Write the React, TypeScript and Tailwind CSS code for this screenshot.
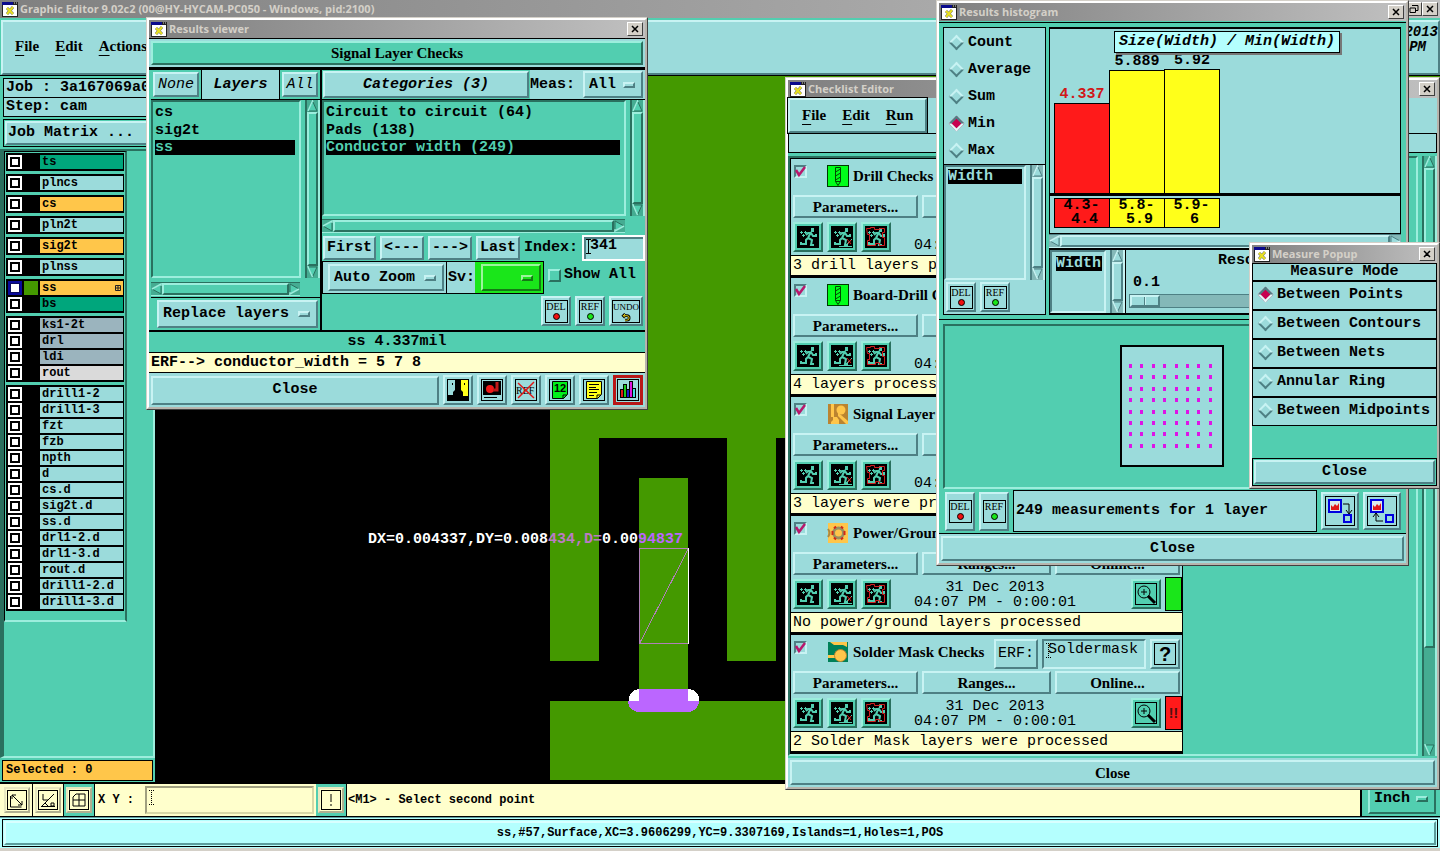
import type { ReactNode } from "react";

const serif = "font-['Liberation_Serif',serif] font-bold";

const raised = "border-2 border-t-[#c8f3f3] border-l-[#c8f3f3] border-b-[#4e8084] border-r-[#4e8084] bg-[#9bdbdb]";
const raisedTeal = "border-2 border-t-[#9ceedd] border-l-[#9ceedd] border-b-[#2a705f] border-r-[#2a705f] bg-[#52ceb0]";
const sunken = "border-2 border-t-[#4e8084] border-l-[#4e8084] border-b-[#c8f3f3] border-r-[#c8f3f3] bg-[#9bdbdb]";
const sunkenTeal = "border-2 border-t-[#2a705f] border-l-[#2a705f] border-b-[#9ceedd] border-r-[#9ceedd] bg-[#52ceb0]";

const layerGroups = [
  [{ name: "ts", color: "bg-[#00a67c]" }],
  [{ name: "plncs", color: "bg-[#9bdbdb]" }],
  [{ name: "cs", color: "bg-[#ffc64a]" }],
  [{ name: "pln2t", color: "bg-[#9bdbdb]" }],
  [{ name: "sig2t", color: "bg-[#ffc64a]" }],
  [{ name: "plnss", color: "bg-[#9bdbdb]" }],
  [
    { name: "ss", color: "bg-[#ffc64a]", active: true },
    { name: "bs", color: "bg-[#00a67c]" },
  ],
  [
    { name: "ks1-2t", color: "bg-[#9bb4be]" },
    { name: "drl", color: "bg-[#9bb4be]" },
    { name: "ldi", color: "bg-[#9bb4be]" },
    { name: "rout", color: "bg-[#dadada]" },
  ],
  [
    "drill1-2", "drill1-3", "fzt", "fzb", "npth", "d", "cs.d", "sig2t.d",
    "ss.d", "drl1-2.d", "drl1-3.d", "rout.d", "drill1-2.d", "drill1-3.d",
  ].map((name) => ({ name, color: "bg-[#9bdbdb]" })),
] as { name: string; color: string; active?: boolean }[][];

const checks = [
  { title: "Drill Checks", icon: "drill", message: "3 drill layers processed", status: "bg-[#1ae61a]" },
  { title: "Board-Drill Checks", icon: "drill", message: "4 layers processed", status: "bg-[#1ae61a]" },
  { title: "Signal Layer Checks", icon: "signal", message: "3 layers were processed", status: "bg-[#ff1a1a]", alert: true },
  { title: "Power/Ground Checks", icon: "power", message: "No power/ground layers processed", status: "bg-[#1ae61a]" },
  { title: "Solder Mask Checks", icon: "mask", message: "2 Solder Mask layers were processed", status: "bg-[#ff1a1a]", alert: true },
];

const measureModes = ["Between Points", "Between Contours", "Between Nets", "Annular Ring", "Between Midpoints"];

function AppIcon() {
  return (
    <svg width="16" height="15" viewBox="0 0 16 15" className="shrink-0">
      <rect width="16" height="15" fill="#222" />
      <rect x="1" y="3" width="14" height="11" fill="#fff" />
      <rect width="11" height="3" fill="#0a0a8c" />
      <path d="M12 1h1M14 1h1" stroke="#ccc" />
      <path d="M5 6l6 6M11 5l-6 7" stroke="#777" strokeWidth="3" />
      <path d="M5 6l6 6M11 5l-6 7" stroke="#e8e020" strokeWidth="2" />
    </svg>
  );
}

function WinButton({ label, children }: { label: string; children: ReactNode }) {
  return (
    <button aria-label={label} className="flex h-[14px] w-4 shrink-0 items-center justify-center border border-t-white border-l-white border-b-[#404040] border-r-[#404040] bg-[#d4d0c8]">
      <svg width="10" height="10" viewBox="0 0 10 10" fill="none" stroke="#000">{children}</svg>
    </button>
  );
}

function TitleBar({ title, children }: { title: string; children?: ReactNode }) {
  return (
    <div className="flex h-[18px] shrink-0 items-center bg-gradient-to-r from-[#808080] to-[#c0c0c0] px-[2px]">
      <AppIcon />
      <h2 className="ml-[2px] flex-1 overflow-hidden font-['Open_Sans',sans-serif] text-[11px] leading-4 font-bold whitespace-nowrap text-[#d4d0c8]">{title}</h2>
      {children ?? (
        <WinButton label={"Close " + title}>
          <path d="M2 2l6 6M8 2l-6 6" strokeWidth="1.500" />
        </WinButton>
      )}
    </div>
  );
}

function Frame({ title, className, children }: { title: string; className: string; children: ReactNode }) {
  return (
    <section aria-label={title} className={"absolute flex flex-col border border-t-[#d4d0c8] border-l-[#d4d0c8] border-b-[#404040] border-r-[#404040] " + className}>
      <div className="flex min-h-0 flex-1 flex-col border-2 border-t-white border-l-white border-b-[#b8b4ac] border-r-[#b8b4ac] bg-[#52ceb0]">
        <TitleBar title={title} />
        {children}
      </div>
    </section>
  );
}

function Arrow({ d, teal }: { d: string; teal?: boolean }) {
  return (
    <svg width="11" height="12" viewBox="0 0 11 12" className="shrink-0">
      <path d={d} fill={teal ? "#52ceb0" : "#9bdbdb"} stroke={teal ? "#2a705f" : "#4e8084"} strokeWidth="1" />
      <path d={d} fill="none" stroke={teal ? "#9ceedd" : "#c8f3f3"} strokeWidth="1.500" strokeDasharray="12 30" />
    </svg>
  );
}

function VScroll({ teal, thumb = "flex-1" }: { teal?: boolean; thumb?: string }) {
  return (
    <div className={(teal ? "bg-[#45ac92] border-l-[#2a705f] border-r-[#9ceedd] " : "bg-[#84b8b8] border-l-[#4e8084] border-r-[#c8f3f3] ") + "flex w-[15px] shrink-0 flex-col items-center border-x-2"}>
      <Arrow teal={teal} d="M1 11L5.5 1L10 11Z" />
      <div className={(teal ? raisedTeal : raised) + " w-full " + thumb} />
      {thumb !== "flex-1" && <div className="flex-1" />}
      <Arrow teal={teal} d="M5.5 11L1 1L10 1Z" />
    </div>
  );
}

function HScroll({ teal }: { teal?: boolean }) {
  return (
    <div className={(teal ? "bg-[#45ac92] border-t-[#2a705f] border-b-[#9ceedd] " : "bg-[#84b8b8] border-t-[#4e8084] border-b-[#c8f3f3] ") + "flex h-[14px] shrink-0 items-center border-y"}>
      <Arrow teal={teal} d="M1 6L10 1L10 11Z" />
      <div className={(teal ? raisedTeal : raised) + " h-full flex-1"} />
      <Arrow teal={teal} d="M10 6L1 11L1 1Z" />
    </div>
  );
}

function OptionMenu({ label, value, className, tone }: { label: string; value: string; className: string; tone?: string }) {
  return (
    <span className={"relative flex " + className}>
      <select aria-label={label} className={"w-full appearance-none pl-1 leading-5 " + (tone ?? raised)}>
        <option>{value}</option>
      </select>
      <span className={"pointer-events-none absolute top-1/2 right-2 h-[6px] w-3 -translate-y-1/2 " + (tone ?? raised)} />
    </span>
  );
}

/* text box with the Motif I-beam insertion cursor at its start */
function TextBox({ id, label, value, className, wrap, dotted }: { id: string; label?: string; value?: string; className: string; wrap: string; dotted?: boolean }) {
  return (
    <span className={"relative flex " + wrap}>
      <input id={id} aria-label={label} defaultValue={value} className={"w-full min-w-0 " + className} />
      <svg width="5" height="15" viewBox="0 0 5 15" className="pointer-events-none absolute top-1 left-1">
        <path d="M0 .5h5M0 14.500h5M2.500 0v15" stroke="#000" strokeDasharray={dotted ? "1 1" : undefined} />
      </svg>
    </span>
  );
}

function Radio({ name, label, checked }: { name: string; label: string; checked?: boolean }) {
  return (
    <label className="flex h-[27px] items-center gap-[6px] pl-[7px] whitespace-nowrap">
      <input
        type="radio"
        name={name}
        defaultChecked={checked}
        className="h-[11px] w-[11px] shrink-0 rotate-45 appearance-none border-2 border-t-[#c8f3f3] border-l-[#c8f3f3] border-b-[#4e8084] border-r-[#4e8084] checked:border-t-[#4e8084] checked:border-l-[#4e8084] checked:border-b-[#e4f8f8] checked:border-r-[#e4f8f8] checked:bg-[#c80050]"
      />
      {label}
    </label>
  );
}

/* 22px pictogram inside a bevelled button */
function IconButton({ label, className, children }: { label: string; className?: string; children: ReactNode }) {
  return (
    <button aria-label={label} className={"flex h-[30px] w-[30px] shrink-0 items-center justify-center " + (className ?? raised)}>
      <svg width="22" height="22" viewBox="0 0 22 22" fill="none">{children}</svg>
    </button>
  );
}

function WordButton({ word, dot, size = "h-[30px] w-[30px]", box = "w-[23px]" }: { word: string; dot?: string; size?: string; box?: string }) {
  return (
    <button className={"flex shrink-0 items-center justify-center " + raised + " " + size}>
      <span className={"flex h-[23px] flex-col items-center border border-black font-['Liberation_Serif',serif] leading-[12px] font-normal " + box + (dot ? " text-[10px]" : " text-[9px]")}>
        {word}
        {dot ? (
          <span className={"h-[7px] w-[7px] rounded-full border border-black " + dot} />
        ) : (
          <svg width="10" height="9" viewBox="0 0 10 10" fill="none">
            <path d="M2 3h4a2.500 2.500 0 0 1 0 5h-2M4 1L2 3l2 2" stroke="#000" strokeWidth="3" />
            <path d="M2 3h4a2.500 2.500 0 0 1 0 5h-2M4 1L2 3l2 2" stroke="#ffe81a" strokeWidth="1" />
          </svg>
        )}
      </span>
    </button>
  );
}

function RunButton({ kind }: { kind: "run" | "area" | "frame" }) {
  return (
    <IconButton label={"Run " + kind} className={raisedTeal}>
      <rect width="22" height="22" fill="#000" />
      <path d="M3 6.500h3M4.500 5v3M7 6.500h3M8.500 5v3M5 9.500h3M6.500 8v3" stroke="#52ceb0" />
      <rect x="14" y="2" width="3" height="4" fill="#52ceb0" />
      <path d="M14 6l-3 6M9 9l2-2h3l2 3h3v-2" stroke="#52ceb0" strokeWidth="2" />
      <path d="M11 12l4 2l-1 5h3M11 12l-2 2v4l-5 0v-2" stroke="#52ceb0" strokeWidth="2" />
      {kind === "area" && (
        <>
          <path d="M8 20.500h13M14 20L21 13" stroke="#52ceb0" />
          <path d="M16 13l4 5M20 14l-3 4" stroke="#e01818" />
        </>
      )}
      {kind === "frame" && <path d="M1.500 2.500h4v-1h4v2h5v-1h5v4h-2v5h2v8h-5v-2h-4v2h-8v-5h2v-6h-2z" stroke="#d02020" />}
    </IconButton>
  );
}

function CheckIcon({ icon }: { icon: string }) {
  return (
    <svg width="22" height="22" viewBox="0 0 22 22" className="shrink-0">
      {icon === "drill" && (
        <>
          <rect x=".5" y=".5" width="21" height="21" fill="#00ff1a" stroke="#003800" />
          <path d="M8.500 2.500h5v14l-2.500 4l-2.500-4zM8.500 7l5-3M8.500 11l5-3M8.500 15l5-3M8.500 16.500h5" fill="none" stroke="#004800" />
        </>
      )}
      {icon === "signal" && (
        <>
          <rect x="1" y="1" width="20" height="20" fill="#bb8430" />
          <path d="M4 1h3v13h3l2 3v4h-8v-2l2-2v-3h-2z" fill="#ffc64a" />
          <circle cx="14" cy="7" r="4.500" fill="#ffc64a" />
          <path d="M11 10v3l8 8h2v-3l-7-6" fill="#ffc64a" />
        </>
      )}
      {icon === "power" && (
        <>
          <rect x="1" y="1" width="20" height="20" fill="#ffc64a" />
          <circle cx="11.500" cy="11" r="5" fill="#ffc64a" stroke="#999060" strokeWidth="3" />
          <path d="M7 6.500l2-2M16 6.500l-2-2M7 15.500l2 2M16 15.500l-2 2M5.500 9v4M17.500 9v4" stroke="#d02818" strokeWidth="2" />
          <path d="M1 7q3 4 0 8" stroke="#aa8840" fill="none" strokeWidth="2" />
        </>
      )}
      {icon === "mask" && (
        <>
          <rect x="1" y="1" width="20" height="20" fill="#008058" />
          <path d="M3 1h17v5l-4-2h-9z" fill="#ffc64a" />
          <path d="M1 14h7v3h-7z" fill="#ffc64a" />
          <circle cx="13.500" cy="14.500" r="6" fill="#ffc64a" stroke="#bb8430" />
        </>
      )}
    </svg>
  );
}

function MenuItem({ label }: { label: string }) {
  return (
    <button className={serif + " text-[15px]"}>
      <span className="underline underline-offset-4">{label[0]}</span>{label.slice(1)}
    </button>
  );
}

function LayerRow({ name, color, active }: { name: string; color: string; active?: boolean }) {
  return (
    <li>
      <label className="flex h-4 items-stretch py-px pr-px pl-[2px]">
        <input
          type="checkbox"
          className={"h-[14px] w-[14px] shrink-0 appearance-none border-2 bg-white " + (active ? "border-[#0a0a9c] shadow-[inset_0_0_0_1px_#0a0a60]" : "border-white shadow-[inset_0_0_0_2px_#000]")}
        />
        <span className={"w-[18px] shrink-0 border-l-2 border-r-2 border-black " + (active ? "bg-[#449900]" : "bg-black")} />
        <span className={"flex flex-1 items-center justify-between pr-[2px] pl-[2px] text-[12px] leading-[14px] " + color}>
          {name}
          {active && (
            <svg width="6" height="6" viewBox="0 0 6 6"><path d="M.5 .5h5v5h-5zM3 0v6M0 3h6" fill="none" stroke="#222" /></svg>
          )}
        </span>
      </label>
    </li>
  );
}

function Sidebar() {
  return (
    <aside className="flex w-[155px] shrink-0 flex-col bg-[#52ceb0]">
      <div className="mx-[3px] mt-[2px] border border-black bg-[#9bdbdb] pl-[2px] leading-[18px]">Job : 3a167069a0</div>
      <div className="mx-[3px] border border-t-0 border-black bg-[#9bdbdb] pl-[2px] leading-[18px]">Step: cam</div>
      <div className="mx-[3px] mt-[2px] border border-black p-px">
        <button className={"h-6 w-full pl-px text-left leading-5 " + raised}>Job Matrix ...</button>
      </div>
      <div className={"mt-[2px] flex-1 border-l-4 " + sunkenTeal}>
        <ul className="flex w-[123px] flex-col gap-[3px] border border-r-2 border-b-2 border-black border-r-[#2a705f] border-b-[#9ceedd] p-px pb-[9px]">
          {layerGroups.map((group, i) => (
            <li key={i} className="bg-black py-px">
              <ul>
                {group.map((layer) => <LayerRow key={layer.name} {...layer} />)}
              </ul>
            </li>
          ))}
        </ul>
      </div>
      <div className="mx-[2px] mt-[2px] mb-px border border-black bg-[#ffc64a] pl-[3px] text-[12px] leading-[19px]">Selected : 0</div>
    </aside>
  );
}

function Board() {
  return (
    <svg className="h-full w-full" shapeRendering="crispEdges">
      <rect width="100%" height="100%" fill="#000" />
      <g fill="#449900">
        <rect x="395" y="0" width="100%" height="362" />
        <rect x="395" y="362" width="49" height="223" />
        <rect x="572" y="362" width="49" height="223" />
        <rect x="484" y="402" width="49" height="240" />
        <rect x="395" y="625" width="100%" height="79" />
      </g>
      <path d="M484 613v12h-10a11 11 0 0 1 10-12zM533 613v12h11a11 11 0 0 0-11-12z" fill="#fff" />
      <path d="M473 625h11v-12h49v12h11a11 11 0 0 1-11 11h-49a11 11 0 0 1-11-11z" fill="#bb66ff" />
      <path d="M533.500 472.500h-49v95h49M484.500 567.500l49-95" fill="none" stroke="#b080b8" />
      <path d="M533.500 472v96" stroke="#fff" />
      <text x="213" y="467" fill="#fff" fontSize="15" fontWeight="bold">
        DX=0.004337,DY=0.008<tspan fill="#bb7bc4">434,D=</tspan>0.00<tspan fill="#bb66ff">94837</tspan>
      </text>
    </svg>
  );
}

function ResultsViewer() {
  return (
    <Frame title="Results viewer" className="top-[17px] left-[146px] w-[502px]">
      <div className="border-y border-black bg-[#9bdbdb] p-[2px]">
        <h3 className={"text-center text-[15px] leading-5 " + serif + " " + raisedTeal}>Signal Layer Checks</h3>
      </div>
      <div className="flex border-t-2 border-black">
        <div className="flex w-[173px] shrink-0 flex-col border-r-2 border-black pl-[2px]">
          <div className="flex h-[30px] border-b border-black">
            <button className={"m-[2px] w-[46px] font-normal italic " + raised}>None</button>
            <span className="flex flex-1 items-center justify-center border-x border-black bg-[#9bdbdb] italic">Layers</span>
            <button className={"m-[2px] w-[36px] font-normal italic " + raised}>All</button>
          </div>
          <div className="flex h-[178px]">
            <ul className={"mr-1 flex-1 p-[2px] pr-1 leading-[18px] " + sunkenTeal}>
              <li>cs</li>
              <li>sig2t</li>
              <li className="bg-black leading-[15px] text-[#52ceb0]">ss</li>
            </ul>
            <VScroll teal />
          </div>
          <div className="mt-1 mr-5 mb-px"><HScroll teal /></div>
          <div className="border-t border-black p-[2px] pl-[6px]">
            <OptionMenu label="Layer action" value="Replace layers" className="h-7 w-full" />
          </div>
        </div>
        <div className="flex min-w-0 flex-1 flex-col">
          <div className="flex h-[30px] border-b border-black">
            <button className={"m-px w-[206px] italic " + raised}>Categories (3)</button>
            <div className="flex flex-1 items-center justify-between bg-[#9bdbdb] pr-[2px]">
              Meas:
              <OptionMenu label="Meas" value="All" className="h-[27px] w-[60px]" />
            </div>
          </div>
          <div className="flex h-[116px]">
            <ul className={"mr-1 flex-1 p-[2px] pr-1 leading-[18px] " + sunkenTeal}>
              <li>Circuit to circuit (64)</li>
              <li>Pads (138)</li>
              <li className="bg-black leading-[15px] text-[#52ceb0]">Conductor width (249)</li>
            </ul>
            <VScroll teal />
          </div>
          <div className="mt-[3px] mr-5 mb-[2px]"><HScroll teal /></div>
          <div className="flex h-[26px] items-center gap-1 pl-px">
            <button className={"h-6 w-[53px] " + raised}>First</button>
            <button className={"h-6 w-[44px] " + raised}>&lt;---</button>
            <button className={"h-6 w-[44px] " + raised}>---&gt;</button>
            <button className={"h-6 w-[44px] " + raised}>Last</button>
            <label htmlFor="index">Index:</label>
            <TextBox id="index" value="341" wrap="h-[26px] flex-1" className="border-2 border-white bg-[#9bdbdb] pb-1 pl-[6px] shadow-[inset_2px_2px_0_#4e8084]" />
          </div>
          <div className="flex h-[33px]">
            <div className="flex border border-black bg-[#9bdbdb] p-[2px] pl-[5px]">
              <OptionMenu label="Zoom mode" value="Auto Zoom" className="w-[116px]" />
            </div>
            <div className="flex items-center border border-l-0 border-black bg-[#9bdbdb] pl-px">
              Sv:
              <span className="flex h-full bg-[#1ae61a] p-[2px] pl-[6px]">
                <OptionMenu label="Severity" value="" className="w-[60px]" tone="border-2 border-t-[#9cf59c] border-l-[#9cf59c] border-b-[#147a14] border-r-[#147a14] bg-[#1ae61a]" />
              </span>
            </div>
            <label className="flex h-[28px] items-center gap-[3px] pl-1">
              <input type="checkbox" className={"h-[13px] w-[13px] appearance-none " + raisedTeal} />
              Show All
            </label>
          </div>
          <div className="flex flex-1 justify-end gap-1 pt-[2px] pr-[2px]">
            <WordButton word="DEL" dot="bg-[#f01010]" />
            <WordButton word="REF" dot="bg-[#1ae61a]" />
            <WordButton word="UNDO" size="h-[30px] w-[34px]" box="w-[28px]" />
          </div>
        </div>
      </div>
      <p className="border-t-2 border-black text-center leading-[20px]">ss 4.337mil</p>
      <p className="border-y border-black bg-[#ffffcc] pl-[2px] leading-[19px]">ERF--&gt; conductor_width = 5 7 8</p>
      <div className="flex items-center gap-1 bg-[#9bdbdb] p-[2px]">
        <button className={"h-[29px] flex-1 " + raised}>Close</button>
        <IconButton label="Compare views">
          <rect width="22" height="22" fill="#000" />
          <path d="M1 1h7v10l-2 2v3h-5z" fill="#9bdbdb" />
          <path d="M14 1h7v16h-5v-4l-2-2z" fill="#ffff1a" />
          <path d="M5 5h1M17 5h1" stroke="#000" strokeWidth="2" />
        </IconButton>
        <IconButton label="Snapshot">
          <rect x=".5" y=".5" width="21" height="21" stroke="#000" />
          <path d="M2 2h18v14h-18z" fill="#000" />
          <circle cx="9" cy="10" r="4" fill="#f01818" />
          <path d="M16 3v8h-4" stroke="#c01818" strokeWidth="3" />
          <path d="M3 18.500h13" stroke="#000" />
        </IconButton>
        <IconButton label="Clear reference">
          <rect x=".5" y=".5" width="21" height="21" stroke="#000" />
          <text x="1" y="15" fontSize="10" fontFamily="Liberation Serif" fontWeight="normal" fill="#000">REF</text>
          <path d="M3 4l16 15M19 3l-16 16" stroke="#e01818" strokeWidth="1.500" />
        </IconButton>
        <IconButton label="Numbers">
          <rect x=".5" y=".5" width="21" height="21" stroke="#000" />
          <path d="M3.500 2.500h15v13l-4 4h-11z" fill="#00f01a" stroke="#000" />
          <path d="M18 16h-4v4" stroke="#000" />
          <text x="5" y="13" fontSize="11" fontFamily="Liberation Sans" fontWeight="bold" fill="#000">12</text>
        </IconButton>
        <IconButton label="Notes">
          <rect x=".5" y=".5" width="21" height="21" stroke="#000" />
          <path d="M3.500 2.500h15v13l-4 4h-11z" fill="#ffff1a" stroke="#000" />
          <path d="M6 5.500h10M6 8.500h7M6 10.500h10M6 13.500h8M6 16.500h5M18 16h-4v4" stroke="#000" />
        </IconButton>
        <IconButton label="Histogram" className="border-[3px] border-[#b81818] bg-[#9bdbdb]">
          <rect x=".5" y=".5" width="21" height="21" stroke="#000" />
          <g stroke="#000">
            <rect x="3.500" y="10.500" width="3" height="8" fill="#e01818" />
            <rect x="6.500" y="5.500" width="3" height="13" fill="#1ac81a" />
            <rect x="9.500" y="10.500" width="3" height="8" fill="#1818d0" />
            <rect x="12.500" y="2.500" width="3" height="16" fill="#e018e0" />
            <rect x="15.500" y="9.500" width="3" height="9" fill="#40e0e0" />
          </g>
        </IconButton>
      </div>
    </Frame>
  );
}

function CheckCard({ title, icon, message, status, alert }: (typeof checks)[number]) {
  return (
    <article className="h-[119px] shrink-0 border-x border-b-[3px] border-black bg-[#9bdbdb]">
      <div className="flex h-[36px] pt-[4px] pr-[2px] pl-[3px]">
        <input type="checkbox" aria-label={title} defaultChecked className={"peer mt-[2px] h-[13px] w-[13px] shrink-0 appearance-none " + sunken} />
        <svg width="13" height="13" viewBox="0 0 13 13" className="pointer-events-none mt-[2px] -ml-[13px] hidden shrink-0 peer-checked:block">
          <path d="M2 5l3 5l6-8" fill="none" stroke="#b8186c" strokeWidth="2.500" />
        </svg>
        <div className="mt-[2px] ml-5 flex h-[22px] flex-1 items-center gap-1">
          <CheckIcon icon={icon} />
          <h3 className={serif + " text-[15px] whitespace-nowrap"}>{title}</h3>
        </div>
        <button className={"mr-1 h-[30px] w-[44px] font-normal " + raised}>ERF:</button>
        <TextBox id={icon + title.length} label={title + " ERF"} value="Soldermask" wrap="mr-1 h-[30px] w-[104px] font-normal" className={"pb-2 pl-1 " + sunken} dotted />
        <button aria-label="Help" className={"flex h-[30px] w-[30px] items-center justify-center " + raised}>
          <span className="h-[22px] w-[22px] border border-black font-['Liberation_Sans',sans-serif] text-[20px] leading-5">?</span>
        </button>
      </div>
      <div className={"flex gap-1 pr-[2px] pl-[2px] " + serif}>
        <button className={"h-[23px] w-[125px] text-[15px] leading-[18px] " + raised}>Parameters...</button>
        <button className={"h-[23px] flex-1 text-[15px] leading-[18px] " + raised}>Ranges...</button>
        <button className={"h-[23px] w-[125px] text-[15px] leading-[18px] " + raised}>Online...</button>
      </div>
      <div className="flex h-[37px] items-center gap-1 pl-[2px]">
        <RunButton kind="run" />
        <RunButton kind="area" />
        <RunButton kind="frame" />
        <p className="flex-1 pt-[2px] pr-8 text-center leading-[15px] font-normal">31 Dec 2013<br />04:07 PM - 0:00:01</p>
        <IconButton label="Zoom to results" className={raisedTeal}>
          <rect x=".5" y=".5" width="21" height="21" stroke="#000" />
          <circle cx="9" cy="9" r="6" stroke="#000" />
          <path d="M6 9h6M9 6v6" stroke="#000" />
          <path d="M13 13l7 7" stroke="#000" strokeWidth="3" />
        </IconButton>
        <span className={"flex h-[34px] w-[17px] items-center justify-center border border-black font-['Liberation_Sans',sans-serif] text-[14px] text-[#501010] " + status}>{alert && "!!"}</span>
      </div>
      <p className="border-t border-black bg-[#ffffcc] pl-[2px] leading-[19px] font-normal">{message}</p>
    </article>
  );
}

function ChecklistEditor() {
  return (
    <Frame title="Checklist Editor" className="top-[77px] right-0 left-[785px]">
      <div className="bg-[#9bdbdb]">
        <div className="flex h-[36px] border-b border-black">
          <nav className={"flex items-center gap-4 px-3 pb-[2px] outline-1 outline-black " + raised}>
            <MenuItem label="File" />
            <MenuItem label="Edit" />
            <MenuItem label="Run" />
          </nav>
        </div>
        <div className="h-[19px] border-x border-b border-black" />
      </div>
      <div className="mt-[3px] flex">
        <div className={"mr-[4px] flex h-[600px] min-w-0 flex-1 flex-col overflow-hidden " + sunkenTeal}>
          <div className="flex w-[393px] flex-col border-t border-black">
            {checks.map((check) => <CheckCard key={check.title} {...check} />)}
          </div>
        </div>
        <VScroll teal thumb="h-[480px]" />
      </div>
      <div className="mt-[2px] bg-[#9bdbdb] p-[2px]">
        <button className={"h-[25px] w-full text-[15px] leading-5 " + serif + " " + raised}>Close</button>
      </div>
    </Frame>
  );
}

const bars = [
  { value: "4.337", from: "4.3-", to: "4.4", height: 90, tone: "bg-[#ff1a1a]", text: "text-[#d01818]" },
  { value: "5.889", from: "5.8-", to: "5.9", height: 123, tone: "bg-[#ffff1a]", text: "text-black" },
  { value: "5.92", from: "5.9-", to: "6", height: 124, tone: "bg-[#ffff1a]", text: "text-black" },
];

function Histogram() {
  return (
    <Frame title="Results histogram" className="top-0 right-[31px] w-[473px]">
      <div className="mt-px flex flex-1 flex-col border-t border-black pr-[5px] pl-1">
        <div className="mt-1 flex h-[288px] gap-[3px]">
          <div className="flex w-[103px] shrink-0 flex-col border border-black bg-[#9bdbdb]">
            <div className="border-b border-black pt-px">
              {["Count", "Average", "Sum", "Min", "Max"].map((stat) => (
                <Radio key={stat} name="stat" label={stat} checked={stat === "Min"} />
              ))}
            </div>
            <div className="flex h-[115px]">
              <ul className={"mr-1 flex-1 p-[2px] " + sunken}>
                <li className="bg-black leading-[15px] text-[#9bdbdb]">Width</li>
              </ul>
              <VScroll />
            </div>
            <div className="flex gap-1 pt-[2px] pl-[2px]">
              <WordButton word="DEL" dot="bg-[#f01010]" />
              <WordButton word="REF" dot="bg-[#1ae61a]" />
            </div>
          </div>
          <div className="flex min-w-0 flex-1 flex-col">
            <div className="relative flex h-[207px] shrink-0 flex-col justify-end border border-t-2 border-black bg-[#9bdbdb]">
              <h3 className="absolute top-[2px] left-[64px] border border-black bg-[#b4fffe] px-1 leading-5 whitespace-nowrap italic shadow-[2px_2px_0_#777]">Size(Width) / Min(Width)</h3>
              <div className="flex items-end border-b-[3px] border-black pl-1">
                {bars.map((bar) => (
                  <div key={bar.value} className={"-mr-px w-14 text-center leading-[17px] " + bar.text}>
                    {bar.value}
                    <div className={"border border-b-0 border-black " + bar.tone} style={{ height: bar.height }} />
                  </div>
                ))}
              </div>
              <div className="mt-[2px] mb-[5px] flex pl-1">
                {bars.map((bar) => (
                  <div key={bar.value} className={"-mr-px h-[30px] w-14 border border-black pr-px text-center leading-[14px] " + bar.tone}>
                    {bar.from}<br /><span className="pl-[6px]">{bar.to}</span>
                  </div>
                ))}
              </div>
            </div>
            <HScroll />
            <div className="flex flex-1 border border-t-2 border-b-2 border-black bg-[#9bdbdb]">
              <ul className={"mr-1 w-[56px] pt-1 pl-1 " + sunken}>
                <li className="w-[46px] bg-black leading-[15px] text-[#9bdbdb]">Width</li>
              </ul>
              <VScroll />
              <div className="flex flex-1 flex-col border-l border-black px-[3px]">
                <label htmlFor="resolution" className="text-center leading-[22px]">Resolution</label>
                <span className="pl-1 leading-[22px]">0.1</span>
                <input
                  id="resolution"
                  type="range"
                  defaultValue="0"
                  className="h-[14px] w-full appearance-none border border-[#4e8084] bg-[#84b8b8] [&::-webkit-slider-thumb]:h-[12px] [&::-webkit-slider-thumb]:w-[30px] [&::-webkit-slider-thumb]:appearance-none [&::-webkit-slider-thumb]:border-2 [&::-webkit-slider-thumb]:border-t-[#c8f3f3] [&::-webkit-slider-thumb]:border-l-[#c8f3f3] [&::-webkit-slider-thumb]:border-b-[#4e8084] [&::-webkit-slider-thumb]:border-r-[#4e8084] [&::-webkit-slider-thumb]:bg-[linear-gradient(90deg,#9bdbdb_12px,#4e8084_12px,#4e8084_13px,#c8f3f3_13px,#c8f3f3_14px,#9bdbdb_14px)]"
                />
              </div>
            </div>
          </div>
        </div>
        <hr className="mt-1 -mr-[5px] -ml-1 border-black" />
        <div className={"mt-1 h-[165px] pl-[175px] " + sunkenTeal}>
          <svg width="104" height="122" viewBox="0 0 104 122" className="mt-[19px]" shapeRendering="crispEdges">
            <rect x="1" y="1" width="102" height="120" fill="#9bdbdb" stroke="#000" strokeWidth="2" />
            {Array.from({ length: 64 }, (_, i) => (
              <rect key={i} x={9 + Math.round((i % 8) * 11.4)} y={19 + Math.round(Math.floor(i / 8) * 11.4)} width="3" height="4" fill="#dd14e6" />
            ))}
          </svg>
        </div>
        <div className="flex h-[44px] items-center gap-1 pl-[2px]">
          <WordButton word="DEL" dot="bg-[#f01010]" size="h-[39px] w-[30px]" />
          <WordButton word="REF" dot="bg-[#1ae61a]" size="h-[39px] w-[30px]" />
          <p className="flex-1 border border-black bg-[#9bdbdb] pl-[2px] leading-[40px]">249 measurements for 1 layer</p>
          {["M18 8h6v9M21 14l3 4l3-4", "M16 25h-7v-8M6 21l3-4l3 4"].map((d, i) => (
            <button key={d} aria-label={i ? "Load histogram" : "Save histogram"} className={"flex h-[38px] w-[38px] items-center justify-center " + raised}>
              <svg width="30" height="30" viewBox="0 0 30 30" fill="none">
                <rect x=".5" y=".5" width="29" height="29" stroke="#000" />
                <rect x="4" y="4" width="12" height="12" fill="#dceaea" stroke="#0000e0" strokeWidth="2" />
                <path d="M6 14v-5l2 2l2-3l2 2l2-3v7z" fill="#e01818" />
                <rect x="19" y="19" width="7" height="7" fill="#9bdbdb" stroke="#0000e0" strokeWidth="2" />
                <path d={d} stroke="#000" />
              </svg>
            </button>
          ))}
        </div>
      </div>
      <div className="border-t border-black bg-[#9bdbdb] p-[2px]">
        <button className={"h-[25px] w-full leading-5 " + raised}>Close</button>
      </div>
    </Frame>
  );
}

function MeasurePopup() {
  return (
    <Frame title="Measure Popup" className="top-[242px] right-0 w-[191px]">
      <fieldset className="border border-black bg-[#9bdbdb]">
        <h3 className="text-center leading-4">Measure Mode</h3>
        {measureModes.map((mode, i) => (
          <div key={mode} className="flex h-[29px] items-center border-t-2 border-black pb-[2px]">
            <Radio name="measure" label={mode} checked={i === 0} />
          </div>
        ))}
      </fieldset>
      <div className="mt-8 border border-black p-px">
        <button className={"h-6 w-full leading-5 " + raised}>Close</button>
      </div>
    </Frame>
  );
}

function ToolIcon({ label, d, active }: { label: string; d: string; active?: boolean }) {
  return (
    <button aria-label={label} className={"flex w-[31px] shrink-0 items-center justify-center border-r border-black " + (active ? "bg-[#52ceb0]" : "")}>
      <span className="border-2 border-t-[#e8e8c0] border-l-[#e8e8c0] border-b-[#b0b090] border-r-[#b0b090] bg-[#ffffcc] p-px">
        <svg width="20" height="20" viewBox="0 0 20 20" fill="none" stroke="#000">
          <rect x=".5" y=".5" width="19" height="19" />
          <path d={d} />
        </svg>
      </span>
    </button>
  );
}

export default function App() {
  return (
    <main className="relative flex h-screen flex-col overflow-hidden bg-[#52ceb0] font-['Liberation_Mono',monospace] text-[15px] leading-[18px] font-bold text-black">
      <TitleBar title="Graphic Editor 9.02c2 (00@HY-HYCAM-PC050 - Windows, pid:2100)">
        <WinButton label="Restore"><path d="M3 1.500h6v5h-2M1 4h5.500v4.500h-5.500z" /></WinButton>
        <WinButton label="Close"><path d="M2 2l6 6M8 2l-6 6" strokeWidth="1.500" /></WinButton>
      </TitleBar>
      <header className={"mt-[2px] ml-px flex h-[55px] shrink-0 items-center justify-between px-3 pb-1 " + raised}>
        <nav className="flex gap-4">
          <MenuItem label="File" />
          <MenuItem label="Edit" />
          <MenuItem label="Actions" />
        </nav>
        <p className="-mr-3 pb-3 text-right text-[14px] leading-[15px] italic">31 Dec 2013<br /><span className="pr-3">04:12 PM</span></p>
      </header>
      <div className="flex min-h-0 flex-1 border-t border-black">
        <Sidebar />
        <div className="min-w-0 flex-1"><Board /></div>
      </div>
      <div className="flex h-[35px] shrink-0 border-t-2 border-b border-black bg-[#ffffcc] pl-[2px] text-[12px]">
        <ToolIcon label="Snap" d="M5 5l10 10M5 9v-4h4M15 11v4h-4M3.500 6v11h11" />
        <ToolIcon label="Angle" d="M4 16L16 4M3 16.500h14M5 4v6h5M7 13l3 3M13 13h3v3h-3z" />
        <ToolIcon label="Grid" d="M4 7l3-3h9v12h-12zM10 4v12M4 10h12" active />
        <label htmlFor="xy" className="flex w-[48px] items-center pl-[3px]">X Y :</label>
        <TextBox id="xy" wrap="m-[2px] w-[169px]" className="border-2 border-t-[#a0a080] border-l-[#a0a080] border-b-[#d8d8a8] border-r-[#d8d8a8] px-1" dotted />
        <ToolIcon label="Message" d="M10 4v8M10 14v2" active />
        <p className="flex flex-1 items-center pl-px">&lt;M1&gt; - Select second point</p>
        <div className="flex w-[80px] border-l-2 border-black bg-[#52ceb0] pr-1 pb-[2px] pl-[6px] text-[15px]">
          <OptionMenu label="Units" value="Inch" className="w-full" tone={raisedTeal} />
        </div>
      </div>
      <footer className="shrink-0 border-t border-[#5c9c9c] border-b-[3px] border-b-[#d4d0c8] bg-[#b4fffe] px-[2px] py-px">
        <div className="border border-black p-px">
          <p className="border-2 border-t-[#d8ffff] border-l-[#d8ffff] border-b-[#5c9c9c] border-r-[#5c9c9c] text-center text-[12px] leading-5">
            ss,#57,Surface,XC=3.9606299,YC=9.3307169,Islands=1,Holes=1,POS
          </p>
        </div>
      </footer>
      <ChecklistEditor />
      <ResultsViewer />
      <Histogram />
      <MeasurePopup />
    </main>
  );
}
